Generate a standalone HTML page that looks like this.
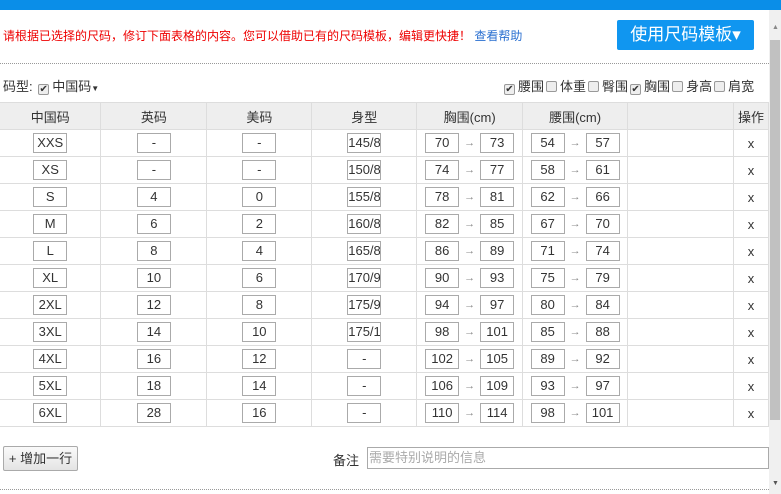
<!DOCTYPE html>
<html><head><meta charset="utf-8"><style>
*{box-sizing:border-box;margin:0;padding:0}
body{width:781px;height:494px;overflow:hidden;background:#fff;font-family:"Liberation Sans","Noto Sans CJK SC",sans-serif;font-size:13px;color:#333;position:relative}
.top{position:absolute;left:0;top:0;width:781px;height:10px;background:#0a8ee8}
.sb{position:absolute;left:769px;top:10px;width:12px;height:484px;background:#f0f0f0}
.sb .th{position:absolute;left:1px;top:30px;width:10px;height:380px;background:#c1c1c1}
.sb .u{position:absolute;top:14px;left:3px;font-size:7px;color:#888}
.sb .d{position:absolute;top:470px;left:3px;font-size:7px;color:#555}
.msg{position:absolute;left:3px;top:27px;color:#e00;font-size:12px}
.msg a{color:#2a6fd0;text-decoration:none}
.btn{position:absolute;left:617px;top:20px;width:137px;height:30px;background:#1096f0;border-radius:2px;color:#fff;font-size:17px;line-height:30px;text-align:center}
.dot1{position:absolute;left:0;top:63px;width:769px;border-top:1px dotted #999}
.dot2{position:absolute;left:0;top:489px;width:769px;border-top:1px dotted #999}
.cb{display:inline-block;width:11px;height:11px;border:1px solid #999;border-radius:2px;background:#eee;vertical-align:-1px;margin:0 3px 0 2px;font-size:10px;line-height:9px;text-align:center;color:#333}
.l1{position:absolute;left:3px;top:76px}
.r1{position:absolute;left:502px;top:76px}
table{position:absolute;left:0;top:102px;border-collapse:collapse;width:769px}
td,th{border:1px solid #ddd;height:27px;text-align:center;font-weight:normal;padding:0}
th{background:#eee;height:27px}
tr td:first-child,tr th:first-child{border-left:none}
.i{display:inline-block;width:34px;height:20px;border:1px solid #aaa;line-height:18px;vertical-align:middle;overflow:hidden;white-space:nowrap;font-size:13px}
.ar{color:#888;font-size:11px;margin:0 5px}
.add{position:absolute;left:3px;top:446px;width:75px;height:25px;border:1px solid #aaa;border-radius:2px;background:linear-gradient(#fafafa,#e4e4e4);line-height:23px;text-align:center}
.bz{position:absolute;left:333px;top:450px}
.in{position:absolute;left:367px;top:447px;width:402px;height:22px;border:1px solid #aaa;color:#aaa;line-height:20px;padding-left:1px}
</style></head><body>
<div class="top"></div>
<div class="msg">请根据已选择的尺码，修订下面表格的内容。您可以借助已有的尺码模板，编辑更快捷！ <a>查看帮助</a></div>
<div class="btn">使用尺码模板▾</div>
<div class="dot1"></div>
<div class="l1">码型: <span class="cb">✔</span>中国码<span style="font-size:8px">▼</span></div>
<div class="r1"><span class="cb">✔</span>腰围<span class="cb"></span>体重<span class="cb"></span>臀围<span class="cb">✔</span>胸围<span class="cb"></span>身高<span class="cb"></span>肩宽</div>
<table>
<colgroup><col style="width:101px"><col style="width:106px"><col style="width:105px"><col style="width:105px"><col style="width:106px"><col style="width:105px"><col style="width:106px"><col style="width:35px"></colgroup>
<tr><th>中国码</th><th>英码</th><th>美码</th><th>身型</th><th>胸围(cm)</th><th>腰围(cm)</th><th></th><th>操作</th></tr>
<tr><td><span class="i">XXS</span></td><td><span class="i">-</span></td><td><span class="i">-</span></td><td><span class="i" style="text-align:left">145/8</span></td><td><span class="i">70</span><span class="ar">→</span><span class="i">73</span></td><td><span class="i">54</span><span class="ar">→</span><span class="i">57</span></td><td></td><td>x</td></tr>
<tr><td><span class="i">XS</span></td><td><span class="i">-</span></td><td><span class="i">-</span></td><td><span class="i" style="text-align:left">150/8</span></td><td><span class="i">74</span><span class="ar">→</span><span class="i">77</span></td><td><span class="i">58</span><span class="ar">→</span><span class="i">61</span></td><td></td><td>x</td></tr>
<tr><td><span class="i">S</span></td><td><span class="i">4</span></td><td><span class="i">0</span></td><td><span class="i" style="text-align:left">155/8</span></td><td><span class="i">78</span><span class="ar">→</span><span class="i">81</span></td><td><span class="i">62</span><span class="ar">→</span><span class="i">66</span></td><td></td><td>x</td></tr>
<tr><td><span class="i">M</span></td><td><span class="i">6</span></td><td><span class="i">2</span></td><td><span class="i" style="text-align:left">160/8</span></td><td><span class="i">82</span><span class="ar">→</span><span class="i">85</span></td><td><span class="i">67</span><span class="ar">→</span><span class="i">70</span></td><td></td><td>x</td></tr>
<tr><td><span class="i">L</span></td><td><span class="i">8</span></td><td><span class="i">4</span></td><td><span class="i" style="text-align:left">165/8</span></td><td><span class="i">86</span><span class="ar">→</span><span class="i">89</span></td><td><span class="i">71</span><span class="ar">→</span><span class="i">74</span></td><td></td><td>x</td></tr>
<tr><td><span class="i">XL</span></td><td><span class="i">10</span></td><td><span class="i">6</span></td><td><span class="i" style="text-align:left">170/9</span></td><td><span class="i">90</span><span class="ar">→</span><span class="i">93</span></td><td><span class="i">75</span><span class="ar">→</span><span class="i">79</span></td><td></td><td>x</td></tr>
<tr><td><span class="i">2XL</span></td><td><span class="i">12</span></td><td><span class="i">8</span></td><td><span class="i" style="text-align:left">175/9</span></td><td><span class="i">94</span><span class="ar">→</span><span class="i">97</span></td><td><span class="i">80</span><span class="ar">→</span><span class="i">84</span></td><td></td><td>x</td></tr>
<tr><td><span class="i">3XL</span></td><td><span class="i">14</span></td><td><span class="i">10</span></td><td><span class="i" style="text-align:left">175/1</span></td><td><span class="i">98</span><span class="ar">→</span><span class="i">101</span></td><td><span class="i">85</span><span class="ar">→</span><span class="i">88</span></td><td></td><td>x</td></tr>
<tr><td><span class="i">4XL</span></td><td><span class="i">16</span></td><td><span class="i">12</span></td><td><span class="i">-</span></td><td><span class="i">102</span><span class="ar">→</span><span class="i">105</span></td><td><span class="i">89</span><span class="ar">→</span><span class="i">92</span></td><td></td><td>x</td></tr>
<tr><td><span class="i">5XL</span></td><td><span class="i">18</span></td><td><span class="i">14</span></td><td><span class="i">-</span></td><td><span class="i">106</span><span class="ar">→</span><span class="i">109</span></td><td><span class="i">93</span><span class="ar">→</span><span class="i">97</span></td><td></td><td>x</td></tr>
<tr><td><span class="i">6XL</span></td><td><span class="i">28</span></td><td><span class="i">16</span></td><td><span class="i">-</span></td><td><span class="i">110</span><span class="ar">→</span><span class="i">114</span></td><td><span class="i">98</span><span class="ar">→</span><span class="i">101</span></td><td></td><td>x</td></tr>
</table>
<div class="add">+ 增加一行</div>
<div class="bz">备注</div>
<div class="in">需要特别说明的信息</div>
<div class="dot2"></div>
<div class="sb"><div class="u">▲</div><div class="th"></div><div class="d">▼</div></div>
</body></html>
